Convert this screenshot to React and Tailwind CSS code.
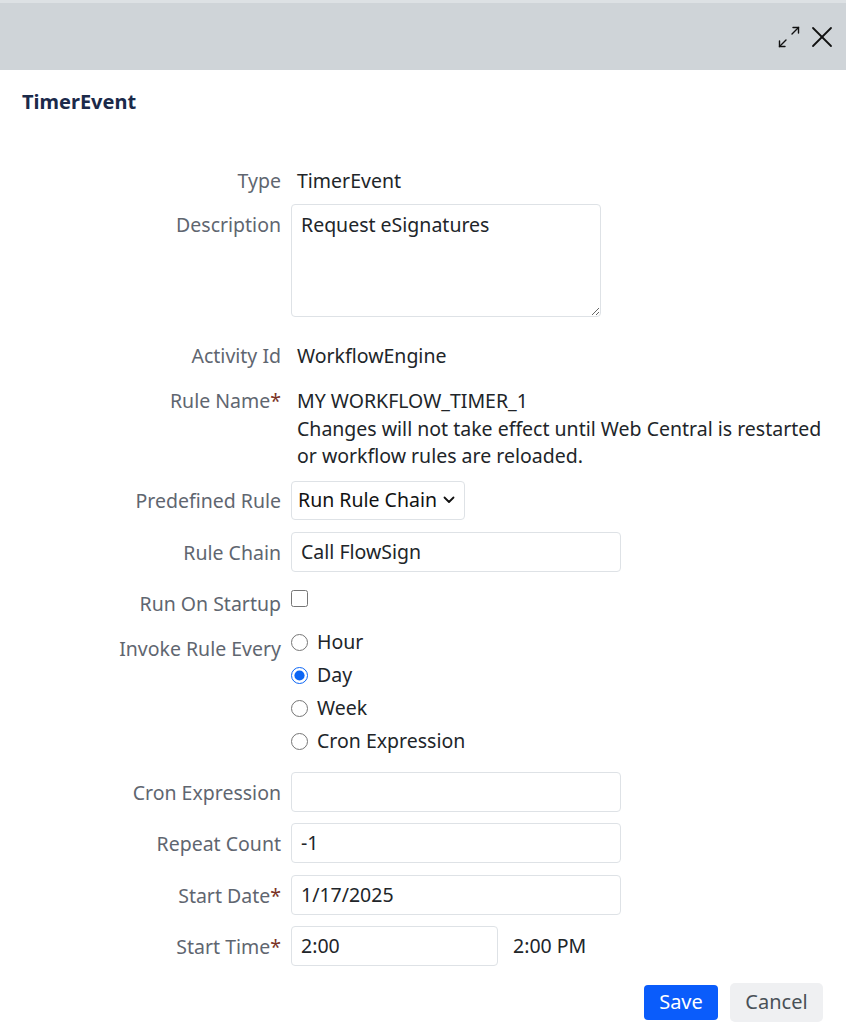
import { useState } from 'react'

const labelCls = 'w-[281px] shrink-0 text-right text-[19.5px] leading-[27px] text-[#5f6670]'
const inputCls = 'h-[40px] border border-[#dee2e6] rounded-[4px] px-[9px] text-[19.5px] text-[#212529] bg-white outline-none'

function Star() {
  return <span className="text-[#7a3326]">*</span>
}

function Row({ label, required, labelPad = '', className = '', children }) {
  return (
    <div className={'flex ' + className}>
      <div className={labelCls + ' ' + labelPad}>
        {label}
        {required && <Star />}
      </div>
      <div className="ml-[10px] flex-1 min-w-0">{children}</div>
    </div>
  )
}

function Radio({ label, value, current, onChange }) {
  return (
    <label className="flex items-center h-[33px] text-[19.5px] text-[#212529]">
      <input
        type="radio"
        name="invoke"
        className="w-[17px] h-[17px] m-0 accent-[#0b65f5]"
        checked={current === value}
        onChange={() => onChange(value)}
      />
      <span className="ml-[9px]">{label}</span>
    </label>
  )
}

export default function App() {
  const [every, setEvery] = useState('day')
  const [startup, setStartup] = useState(false)

  return (
    <div className="w-full h-[1035px] bg-white overflow-hidden font-['Noto_Sans',sans-serif]">
      {/* Header bar */}
      <div className="h-[70px] bg-[#cfd4d8] border-t-[3px] border-[#dde1e4] flex items-center justify-end pr-[13px] gap-[10px]">
        <svg width="24" height="24" viewBox="0 0 24 24" fill="none" stroke="#111" strokeWidth="1.4" strokeLinecap="round">
          <polyline points="16,2.5 21.5,2.5 21.5,8" />
          <line x1="21.5" y1="2.5" x2="15" y2="9" />
          <polyline points="2.5,16 2.5,21.5 8,21.5" />
          <line x1="2.5" y1="21.5" x2="9" y2="15" />
        </svg>
        <svg width="22" height="22" viewBox="0 0 22 22" fill="none" stroke="#111" strokeWidth="1.8" strokeLinecap="round">
          <line x1="2" y1="2" x2="20" y2="20" />
          <line x1="20" y1="2" x2="2" y2="20" />
        </svg>
      </div>

      <h1 className="mt-[18px] ml-[22px] text-[20px] leading-[28px] font-bold text-[#1b2a4a]">TimerEvent</h1>

      <div className="flex flex-col">
        <Row label="Type" className="mt-[51px]">
          <div className="ml-[6px] text-[19.5px] leading-[27px] text-[#212529]">TimerEvent</div>
        </Row>

        <Row label="Description" labelPad="pt-[7px]" className="mt-[10px]">
          <textarea
            readOnly
            defaultValue="Request eSignatures"
            className="block w-[310px] h-[113px] border border-[#dee2e6] rounded-[4px] px-[9px] py-[6px] text-[19.5px] leading-[27px] text-[#212529] outline-none"
          />
        </Row>

        <Row label="Activity Id" className="mt-[25px]">
          <div className="ml-[6px] text-[19.5px] leading-[27px] text-[#212529]">WorkflowEngine</div>
        </Row>

        <Row label="Rule Name" required className="mt-[18px]">
          <div className="ml-[6px] text-[19.5px] leading-[27.5px] text-[#212529]">
            <div>MY WORKFLOW_TIMER_1</div>
            <div>Changes will not take effect until Web Central is restarted</div>
            <div>or workflow rules are reloaded.</div>
          </div>
        </Row>

        <Row label="Predefined Rule" labelPad="pt-[6px]" className="mt-[11px]">
          <div className="w-[174px] h-[39px] border border-[#dee2e6] rounded-[4px] pl-[6px] pr-[9px] flex items-center justify-between text-[19.5px] text-[#111]">
            <span>Run Rule Chain</span>
            <svg width="12" height="8" viewBox="0 0 12 8" fill="none" stroke="#111" strokeWidth="1.8" strokeLinecap="round" strokeLinejoin="round">
              <polyline points="1.5,1.5 6,6 10.5,1.5" />
            </svg>
          </div>
        </Row>

        <Row label="Rule Chain" labelPad="pt-[7px]" className="mt-[12px]">
          <input readOnly defaultValue="Call FlowSign" className={inputCls + ' w-[330px]'} />
        </Row>

        <Row label="Run On Startup" labelPad="pt-[7px]" className="mt-[11px]">
          <input
            type="checkbox"
            checked={startup}
            onChange={e => setStartup(e.target.checked)}
            className="block mt-[7px] w-[17px] h-[17px] m-0"
          />
        </Row>

        <Row label="Invoke Rule Every" labelPad="pt-[9px]" className="mt-[9px]">
          <div className="flex flex-col">
            <Radio label="Hour" value="hour" current={every} onChange={setEvery} />
            <Radio label="Day" value="day" current={every} onChange={setEvery} />
            <Radio label="Week" value="week" current={every} onChange={setEvery} />
            <Radio label="Cron Expression" value="cron" current={every} onChange={setEvery} />
          </div>
        </Row>

        <Row label="Cron Expression" labelPad="pt-[7px]" className="mt-[14px]">
          <input readOnly defaultValue="" className={inputCls + ' w-[330px]'} />
        </Row>

        <Row label="Repeat Count" labelPad="pt-[7px]" className="mt-[11px]">
          <input readOnly defaultValue="-1" className={inputCls + ' w-[330px]'} />
        </Row>

        <Row label="Start Date" required labelPad="pt-[7px]" className="mt-[12px]">
          <input readOnly defaultValue="1/17/2025" className={inputCls + ' w-[330px]'} />
        </Row>

        <Row label="Start Time" required labelPad="pt-[7px]" className="mt-[11px]">
          <div className="flex items-center">
            <input readOnly defaultValue="2:00" className={inputCls + ' w-[207px]'} />
            <span className="ml-[15px] text-[19.5px] text-[#212529]">2:00 PM</span>
          </div>
        </Row>

        <div className="mt-[17px] flex items-center justify-end pr-[23px] gap-[12px]">
          <button className="w-[74px] h-[35px] rounded-[4px] bg-[#0a5cfb] text-white text-[20px]">Save</button>
          <button className="w-[93px] h-[39px] rounded-[5px] bg-[#eff0f2] text-[#495057] text-[20px]">Cancel</button>
        </div>
      </div>
    </div>
  )
}
